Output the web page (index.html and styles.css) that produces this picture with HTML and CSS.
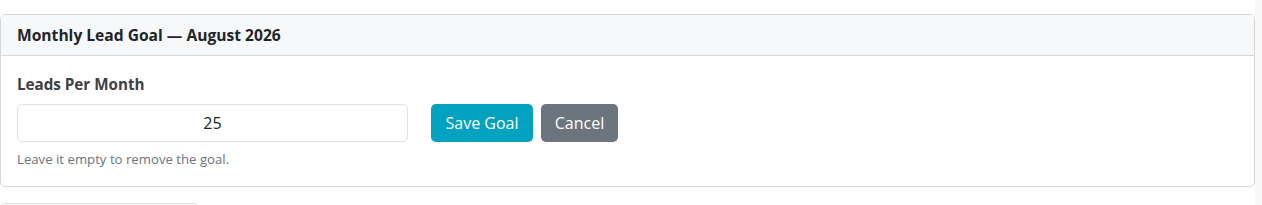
FILE: index.html
```html
<!DOCTYPE html>
<html>
<head>
<meta charset="utf-8">
<link rel="stylesheet" href="styles.css">
</head>
<body>
<div class="page">
  <main class="content">
    <section class="card">
      <header class="card-header">Monthly Lead Goal — August 2026</header>
      <div class="card-body">
        <label class="field-label" for="goal">Leads Per Month</label>
        <div class="form-row">
          <input id="goal" class="goal-input" type="text" value="25">
          <button class="btn btn-save">Save Goal</button>
          <button class="btn btn-cancel">Cancel</button>
        </div>
        <p class="help">Leave it empty to remove the goal.</p>
      </div>
    </section>
    <div class="next-card"></div>
  </main>
  <div class="scroll-strip"></div>
</div>
</body>
</html>
```

FILE: styles.css
```css
html, body {
  margin: 0;
  padding: 0;
  background: #ffffff;
  font-family: "Open Sans", "Noto Sans", sans-serif;
  color: #212529;
}
.page {
  display: flex;
  height: 205px;
  overflow: hidden;
}
.content {
  flex: 1;
  padding-top: 14px;
}
.scroll-strip {
  width: 7px;
  background: #f8f8f8;
}
.card {
  border: 1px solid #d6d8db;
  border-radius: 5px;
  background: #fff;
  overflow: hidden;
}
.card-header {
  background: #f7f8f9;
  border-bottom: 1px solid #d6d8db;
  padding: 10px 16px 10px;
  font-size: 15.6px;
  line-height: 20px;
  font-weight: 700;
  color: #212529;
}
.card-body {
  padding: 18px 16px 18px;
}
.field-label {
  display: block;
  font-size: 15.2px;
  line-height: 20px;
  font-weight: 700;
  color: #3d4146;
  margin-bottom: 10px;
}
.form-row {
  display: flex;
  align-items: center;
  gap: 8px;
}
.goal-input {
  width: 391px;
  height: 38px;
  box-sizing: border-box;
  border: 1px solid #dee2e6;
  border-radius: 5px;
  text-align: center;
  font-family: inherit;
  font-size: 16px;
  color: #212529;
  margin-right: 15px;
  outline: none;
}
.btn {
  height: 38px;
  border: none;
  border-radius: 5px;
  color: #fff;
  font-family: inherit;
  font-size: 16px;
  padding: 0;
}
.btn-save {
  background: #00a2c0;
  width: 102px;
}
.btn-cancel {
  background: #6c757d;
  width: 77px;
}
.help {
  margin: 9px 0 0;
  font-size: 13.2px;
  line-height: 17px;
  color: #6c757d;
}
.next-card {
  margin-top: 16px;
  width: 197px;
  height: 20px;
  border: 1px solid #dee2e6;
  border-radius: 5px;
}
```
